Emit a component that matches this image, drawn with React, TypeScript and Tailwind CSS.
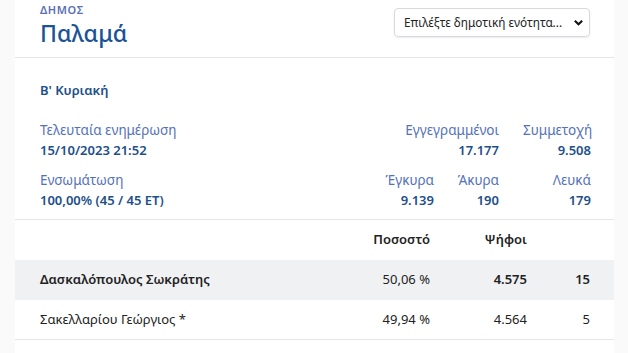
import React from 'react';

const font = { fontFamily: '"Noto Sans", "Open Sans", sans-serif' };

const Stat = ({ label, value, className = '' }: { label: string; value: string; className?: string }) => (
  <div className={`flex flex-col ${className}`}>
    <span className="text-[13.5px] leading-[20px] text-[#5472b8]">{label}</span>
    <span className="text-[13px] leading-[20px] font-semibold text-[#1d4f8b]">{value}</span>
  </div>
);

const rows = [
  { name: 'Δασκαλόπουλος Σωκράτης', pct: '50,06 %', votes: '4.575', seats: '15', lead: true },
  { name: 'Σακελλαρίου Γεώργιος *', pct: '49,94 %', votes: '4.564', seats: '5', lead: false },
];

export default function App() {
  return (
    <div className="h-[353px] w-[628px] overflow-hidden bg-[#fafafa] pl-[15px] pr-[14px]" style={font}>
      <div className="h-full bg-white">
        <div className="flex h-[58px] items-start justify-between border-b border-[#e3e5e8] pl-[25px] pr-[24px]">
          <div className="pt-[3px]">
            <div className="text-[11px] font-semibold uppercase leading-[14px] tracking-[0.6px] text-[#5b6fb5]">Δημος</div>
            <div className="mt-[1px] text-[23px] font-medium leading-[30px] text-[#1b5397]">Παλαμά</div>
          </div>
          <div className="mt-[8px] flex h-[29px] w-[196px] items-center justify-between rounded-[4px] border border-[#d6d9de] pl-[9px] pr-[5px] shadow-[0_1px_2px_rgba(0,0,0,0.08)]">
            <span className="text-[11.8px] text-[#222]">Επιλέξτε δημοτική ενότητα...</span>
            <svg width="11" height="11" viewBox="0 0 12 12">
              <path d="M2 4l4 4 4-4" fill="none" stroke="#111" strokeWidth="2.2" />
            </svg>
          </div>
        </div>

        <div className="border-b border-[#e3e5e8] pl-[25px] pr-[23px] pt-[22px] pb-[9px]">
          <div className="text-[13px] font-semibold leading-[20px] text-[#1d4f8b]">Β' Κυριακή</div>
          <div className="mt-[20px] flex items-start justify-between">
            <Stat label="Τελευταία ενημέρωση" value="15/10/2023 21:52" />
            <div className="flex gap-[24px] text-right">
              <Stat label="Εγγεγραμμένοι" value="17.177" />
              <Stat label="Συμμετοχή" value="9.508" className="w-[68px]" />
            </div>
          </div>
          <div className="mt-[10px] flex items-start justify-between">
            <Stat label="Ενσωμάτωση" value="100,00% (45 / 45 ET)" />
            <div className="flex text-right">
              <Stat label="Έγκυρα" value="9.139" className="w-[65px]" />
              <Stat label="Άκυρα" value="190" className="w-[65px]" />
              <Stat label="Λευκά" value="179" className="w-[92px]" />
            </div>
          </div>
        </div>

        <div className="flex h-[40px] items-center pl-[25px] pr-[24px] text-[13px] font-semibold text-[#222]">
          <div className="flex-1" />
          <div className="w-[90px] text-right">Ποσοστό</div>
          <div className="w-[97px] text-right">Ψήφοι</div>
          <div className="w-[63px]" />
        </div>
        {rows.map((r) => (
          <div
            key={r.name}
            className={`flex h-[40px] items-center pl-[25px] pr-[24px] text-[13px] text-[#222] ${r.lead ? 'bg-[#f0f1f3] font-semibold' : 'border-b border-[#e3e5e8]'}`}
          >
            <div className="flex-1">{r.name}</div>
            <div className={`w-[90px] text-right ${r.lead ? 'font-normal' : ''}`}>{r.pct}</div>
            <div className="w-[97px] text-right">{r.votes}</div>
            <div className="w-[63px] text-right">{r.seats}</div>
          </div>
        ))}
      </div>
    </div>
  );
}
